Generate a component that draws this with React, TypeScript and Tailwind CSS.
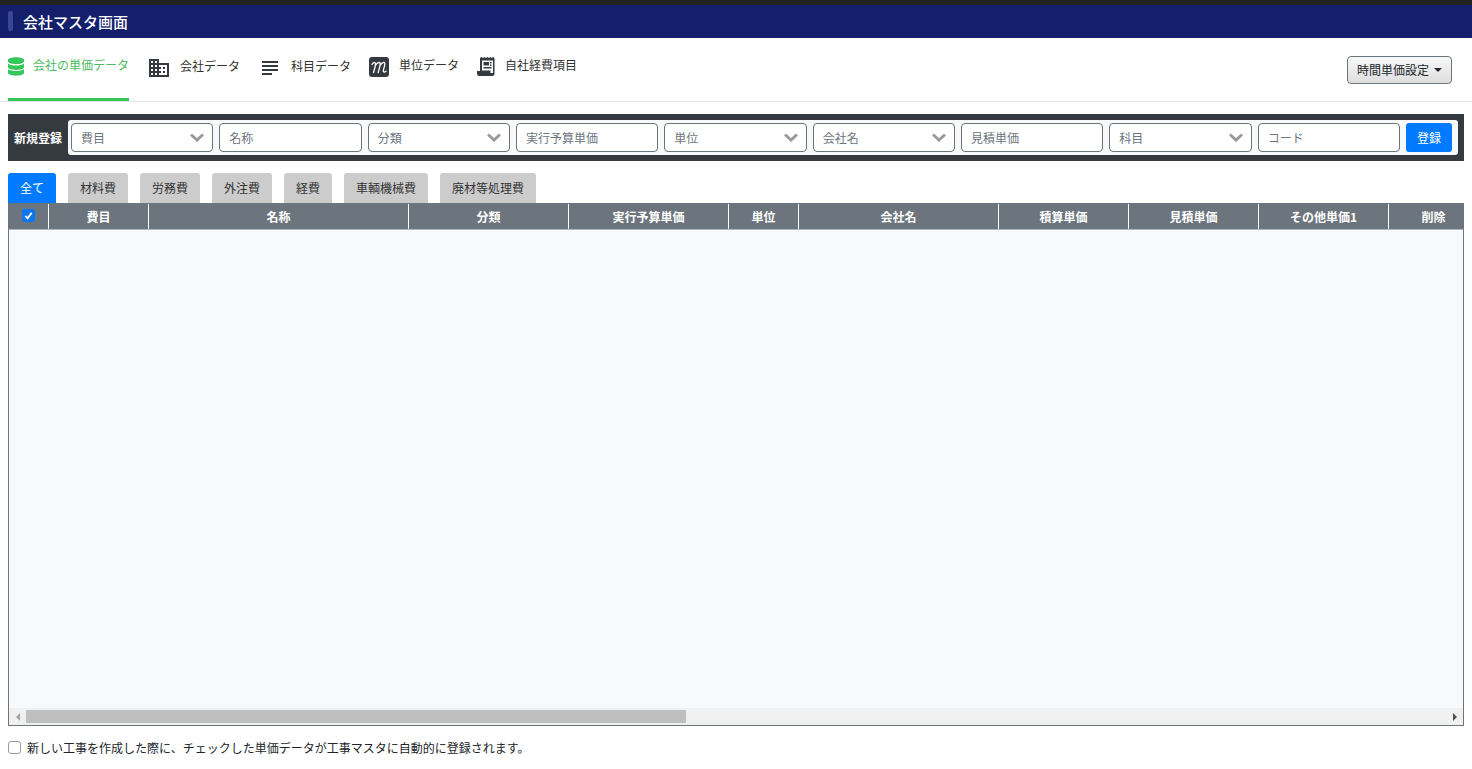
import { FaDatabase } from 'react-icons/fa';
import { MdDomain, MdSubject } from 'react-icons/md';

const navItems = [
    { label: '会社データ', textClass: 'mt-[1px]', icon: <MdDomain className="w-[24px] h-[24px] text-[#343a40]" /> },
    { label: '科目データ', textClass: 'mt-[1px]', icon: <MdSubject className="w-[24px] h-[24px] text-[#343a40]" /> },
    {
        label: '単位データ',
        textClass: '',
        icon: (
            <svg viewBox="0 0 20 20" className="w-[20px] h-[20px] mt-[1px] mr-px" fill="none">
                <rect width="20" height="20" rx="3" fill="#343a40" />
                {/* script m */}
                <path
                    d="M3 7.500C3.800 5.500 6.500 4.500 6.500 7c0 2.500-1.200 5.500-2 8.500M6.800 8c1.200-2.500 4.400-3.800 4.400-1 0 2.500-1.300 5.500-2 8.500M11.500 8c1.200-2.500 4.300-3.800 4.300-1 0 2.500-1.500 5-1.500 7 0 1.500 1.500 1.300 2.700.2"
                    stroke="white"
                    strokeWidth="1.300"
                    strokeLinecap="round"
                />
            </svg>
        ),
    },
    {
        label: '自社経費項目',
        textClass: '',
        icon: (
            <svg viewBox="0 0 18 19" className="w-[18px] h-[19px] mt-[1px] mr-px" fill="#343a40">
                <path fillRule="evenodd" d="M3 1l1.500-1 1.500 1 1.500-1 1.500 1 1.500-1 1.500 1 1.500-1 1.500 1 1.500-1 1 1v15.500a2.500 2.500 0 0 1-2.500 2.500H2.500A2.500 2.500 0 0 1 0 16.500V14h3V1zM5 3.500V13.500h8.500V16H16V3.500H5z" />
                <path d="M6.500 5h5.500v3.500H6.500zM13 5h1.500v1.500H13zM13 7.500h1.500V9H13zM6.500 10h8v1.500h-8z" />
            </svg>
        ),
    },
];

const fields = [
    { label: '費目', select: true },
    { label: '名称' },
    { label: '分類', select: true },
    { label: '実行予算単価' },
    { label: '単位', select: true },
    { label: '会社名', select: true },
    { label: '見積単価' },
    { label: '科目', select: true },
    { label: 'コード' },
];

const costTabs = ['材料費', '労務費', '外注費', '経費', '車輌機械費', '廃材等処理費'];

const columns = [
    { label: '費目', width: 'w-[100px]' },
    { label: '名称', width: 'w-[260px]' },
    { label: '分類', width: 'w-[160px]' },
    { label: '実行予算単価', width: 'w-[160px]' },
    { label: '単位', width: 'w-[70px]' },
    { label: '会社名', width: 'w-[200px]' },
    { label: '積算単価', width: 'w-[130px]' },
    { label: '見積単価', width: 'w-[130px]' },
    { label: 'その他単価1', width: 'w-[130px]' },
    { label: '削除', width: 'w-[90px]' },
];

export default function App() {
    return (
        <div className="w-[1472px] h-[769px] overflow-hidden bg-white text-[#212529] font-['Noto_Sans_CJK_JP','Noto_Sans',sans-serif]">
            {/* Title bar */}
            <div className="h-[5px] bg-[#212121]"></div>
            <div className="h-[33px] bg-[#131f6b] flex items-center pl-[8px] pb-[1px]">
                <div className="w-[5px] h-[20px] rounded-[2px] bg-[#3a4697]"></div>
                <h1 className="ml-[10px] text-[15px] font-medium text-white leading-none">会社マスタ画面</h1>
            </div>

            {/* Nav */}
            <div className="h-[64px] border-b border-[#e5e5e5] flex items-start pl-[8px] pr-[20px]">
                <div className="w-[121px] h-[63px] border-b-[3px] border-[#34c759] flex items-start gap-[9px] pt-[18px]">
                    <FaDatabase className="w-[16px] h-[19px] mt-px text-[#34c759]" />
                    <span className="text-[12px] leading-[17px] text-[#4cbb5f]">会社の単価データ</span>
                </div>
                <div className="flex items-start ml-[18px] gap-[18px] pt-[18px]">
                    {navItems.map((item) => (
                        <div key={item.label} className="flex items-start gap-[9px]">
                            {item.icon}
                            <span className={`${item.textClass} text-[12px] leading-[17px] text-[#333]`}>{item.label}</span>
                        </div>
                    ))}
                </div>
                <button className="ml-auto mt-[18px] w-[105px] h-[28px] rounded-[4px] border border-[#6c757d] bg-linear-to-b from-[#f8f8f8] to-[#dedede] text-[12px] text-[#212529] flex items-center justify-center gap-[5px]">
                    時間単価設定
                    <span className="w-0 h-0 border-x-[4px] border-x-transparent border-t-[4px] border-t-[#212529]"></span>
                </button>
            </div>

            {/* New entry form */}
            <div className="mx-[8px] mt-[12px] h-[47px] bg-[#343a40] flex items-center pl-[6px] pr-[6px]">
                <span className="w-[54px] shrink-0 text-[12px] font-bold text-white leading-none">新規登録</span>
                <div className="flex-1 h-[35px] rounded-[3px] bg-[#f8f9fa] flex items-center gap-[6px] pl-[3px] pr-[6px]">
                    {fields.map((field) => (
                        <div
                            key={field.label}
                            className="flex-1 min-w-0 h-[29px] rounded-[4px] border border-[#6c757d] bg-white flex items-center justify-between pl-[9px] pr-[8px] text-[12px] text-[#6c757d]"
                        >
                            <span>{field.label}</span>
                            {field.select && (
                                <svg viewBox="0 0 14 9" className="w-[14px] h-[9px]" fill="none" stroke="#9a9a9a" strokeWidth="3">
                                    <path d="M1 1.500 7 7l6-5.500" />
                                </svg>
                            )}
                        </div>
                    ))}
                    <button className="w-[46px] h-[29px] shrink-0 rounded-[3px] bg-[#007bff] text-white text-[12px]">登録</button>
                </div>
            </div>

            {/* Cost type tabs */}
            <div className="mx-[8px] mt-[12px] h-[30px] flex items-stretch gap-[12px]">
                <div className="w-[48px] rounded-t-[3px] bg-[#007bff] text-white text-[12px] flex items-center justify-center">全て</div>
                {costTabs.map((tab) => (
                    <div key={tab} className="px-[12px] rounded-t-[3px] bg-[#cccccc] text-[#333] text-[12px] flex items-center justify-center">
                        {tab}
                    </div>
                ))}
            </div>

            {/* Table */}
            <div className="mx-[8px] h-[523px] border border-t-0 border-[#6c757d] bg-[#f8f9fa] flex flex-col overflow-hidden">
                <div className="-mx-px h-[27px] shrink-0 flex bg-[#6c757d] border-b border-[#adb5bd] text-white text-[12px] font-bold">
                    <div className="w-[40px] shrink-0 flex items-start justify-center pt-[6px]">
                        <span className="w-[13px] h-[13px] rounded-[2px] bg-[#0b76ef] flex items-center justify-center">
                            <svg viewBox="0 0 12 12" className="w-[11px] h-[11px]" fill="none" stroke="white" strokeWidth="2">
                                <path d="M2.500 6.500 5 9l4.500-6" />
                            </svg>
                        </span>
                    </div>
                    {columns.map((col) => (
                        <div key={col.label} className={`${col.width} shrink-0 mt-px border-l border-white flex items-center justify-center`}>
                            {col.label}
                        </div>
                    ))}
                </div>
                <div className="flex-1"></div>
                {/* Scrollbar */}
                <div className="h-[17px] shrink-0 bg-[#f0f0f0] flex items-center py-[2px]">
                    <span className="w-[17px] shrink-0 flex justify-center">
                        <span className="w-0 h-0 border-y-[4px] border-y-transparent border-r-[4px] border-r-[#a3a3a3]"></span>
                    </span>
                    <div className="w-[660px] h-[13px] bg-[#bfbfbf]"></div>
                    <span className="ml-auto w-[17px] shrink-0 flex justify-center">
                        <span className="w-0 h-0 border-y-[4px] border-y-transparent border-l-[4px] border-l-[#505050]"></span>
                    </span>
                </div>
            </div>

            {/* Footer note */}
            <label className="ml-[8px] mt-[13px] flex items-center gap-[6px] text-[12px] leading-[17px] text-[#212529]">
                <span className="w-[13px] h-[13px] rounded-[3px] border border-[#9a9a9a] bg-white"></span>
                新しい工事を作成した際に、チェックした単価データが工事マスタに自動的に登録されます。
            </label>
        </div>
    );
}
